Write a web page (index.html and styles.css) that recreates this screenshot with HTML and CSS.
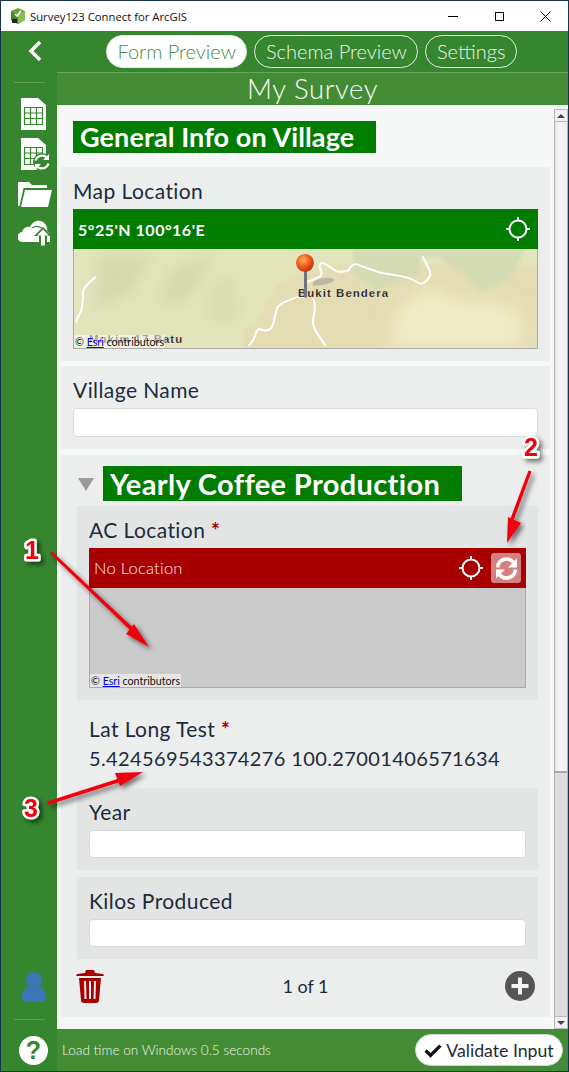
FILE: index.html
```html
<!DOCTYPE html>
<html lang="en">
<head>
    <meta charset="UTF-8">
    <title>Survey123 Connect for ArcGIS</title>
    <link rel="stylesheet" href="styles.css">
</head>
<body>
    <div class="window">
        <div class="titlebar">
            <svg class="app-logo" viewBox="0 0 16 16">
                <path d="M8 0l7 3v9l-7 4-7-4V3z" fill="#6aa53a"/>
                <path d="M8 7l7-4v9l-7 4z" fill="#8dbb55"/>
                <path d="M1 3l7 4v9l-7-4z" fill="#4d8430"/>
                <path d="M5 6l2 2 4-5" fill="none" stroke="#fff" stroke-width="1.6"/>
                <rect x="2" y="11" width="5" height="4" fill="#222"/>
            </svg>
            <span class="app-name">Survey123 Connect for ArcGIS</span>
            <div class="win-controls">
                <svg viewBox="0 0 11 11"><path d="M0 5.5h10" stroke="#000"/></svg>
                <svg viewBox="0 0 11 11"><rect x="1.5" y="1.5" width="8" height="8" fill="none" stroke="#000"/></svg>
                <svg viewBox="0 0 11 11"><path d="M.5.5l10 10M10.5.5l-10 10" stroke="#000" fill="none"/></svg>
            </div>
        </div>

        <div class="app">
            <div class="sidebar">
                <svg class="back-icon" viewBox="0 0 14 22"><path d="M12 2L3 11l9 9" fill="none" stroke="#fff" stroke-width="3.4"/></svg>
                <div class="side-line"></div>
                <svg class="side-icon sheet" viewBox="0 0 25 32">
                    <path d="M0 0h17l8 7v25H0z" fill="#fff"/>
                    <path d="M3.500 9.500h18v17h-18zM3.500 15h18M3.500 20.500h18M9.500 9.500v17M15.500 9.500v17" fill="none" stroke="#36862f" stroke-width="1.200"/>
                </svg>
                <svg class="side-icon sheet-sync" viewBox="0 0 30 32">
                    <path d="M0 0h17l8 7v25H0z" fill="#fff"/>
                    <path d="M3.500 9.500h18v17h-18zM3.500 15h18M3.500 20.500h18M9.500 9.500v17M15.500 9.500v17" fill="none" stroke="#36862f" stroke-width="1.200"/>
                    <circle cx="21" cy="24" r="9" fill="#36862f"/>
                    <path d="M14.500 22.500a7 7 0 0 1 11.500-3M27.500 25.500a7 7 0 0 1-11.500 3" fill="none" stroke="#fff" stroke-width="2.200"/>
                    <path d="M28 16v6h-6zM14 32v-6h6z" fill="#fff"/>
                </svg>
                <svg class="side-icon folder" viewBox="0 0 34 26">
                    <path d="M0 24V0h11l3 3h15v3H5.500L1.500 24z" fill="#fff"/>
                    <path d="M7 8h27l-4 17H3z" fill="#fff"/>
                </svg>
                <svg class="side-icon cloud" viewBox="0 0 33 27">
                    <path d="M5 23a5 5 0 0 1-1-10c1-4 5-6 8-5 2-5 8-8 13-5 3 2 5 6 4 9 2 1 3 3 3 5v6z" fill="#fff"/>
                    <path d="M14 9q6-4 12 2" fill="none" stroke="#36862f" stroke-width="1.200"/>
                    <path d="M25 8l9 9h-5v10h-8V17h-5z" fill="#36862f"/>
                    <path d="M25 10.500l6 6h-4v10h-4v-10h-4z" fill="#fff"/>
                </svg>
                <div class="side-space"></div>
                <svg class="side-icon person" viewBox="0 0 24 30">
                    <circle cx="12" cy="8" r="8" fill="#3e75b5"/>
                    <path d="M0 26c0-6 2-10 7-12 2 3 8 3 10 0 5 2 7 6 7 12 0 3-2 4-5 4H5c-3 0-5-1-5-4z" fill="#3e75b5"/>
                </svg>
                <div class="side-line bottom"></div>
                <div class="help">?</div>
            </div>

            <div class="main">
                <div class="tabs">
                    <div class="tab active">Form Preview</div>
                    <div class="tab">Schema Preview</div>
                    <div class="tab">Settings</div>
                </div>
                <div class="survey-title">My Survey</div>

                <div class="body">
                    <div class="form">
                        <div class="section-title first">General Info on Village</div>

                        <div class="card">
                            <div class="label">Map Location</div>
                            <div class="map-head green">
                                <span class="coords">5°25'N 100°16'E</span>
                                <svg class="target" viewBox="0 0 26 26">
                                    <circle cx="13" cy="13" r="8.500" fill="none" stroke="#fff" stroke-width="2"/>
                                    <path d="M13 1v4M13 21v4M1 13h4M21 13h4" stroke="#fff" stroke-width="2"/>
                                </svg>
                            </div>
                            <div class="map">
                                <svg class="map-art" viewBox="0 0 465 100" preserveAspectRatio="none">
                                    <defs>
                                        <filter id="soft"><feGaussianBlur stdDeviation="7"/></filter>
                                        <filter id="soft2"><feGaussianBlur stdDeviation="1.500"/></filter>
                                        <filter id="soft3"><feGaussianBlur stdDeviation="9"/></filter>
                                        <radialGradient id="ball" cx="40%" cy="35%" r="70%">
                                            <stop offset="0" stop-color="#ffb060"/>
                                            <stop offset="0.5" stop-color="#f0601c"/>
                                            <stop offset="1" stop-color="#c02a10"/>
                                        </radialGradient>
                                    </defs>
                                    <rect width="465" height="100" fill="#e2e5bc"/>
                                    <g filter="url(#soft)">
                                        <path d="M25 5h55l-22 40-38 18zM95 22l50-22-30 52-30 8z" fill="#d6d9ae"/>
                                        <path d="M130 45l28-22 10 45-30 12z" fill="#d9ddb3"/>
                                    </g>
                                    <g filter="url(#soft2)">
                                        <path d="M170 100v-19l12-4 8-16 15-27 25-8 40-10h195v84z" fill="#e4dcb2"/>
                                        <path d="M280 0l2 28 22 13 42-14 2-18 16-2 32 22 10 16 32-14 15-31z" fill="#d4dbb3"/>
                                    </g>
                                    <path d="M325 60l30-22 30 14 40 2 25 10v36H315z" fill="#f1ecc8" filter="url(#soft3)"/>
                                    <g fill="none" stroke="#fff" stroke-width="2">
                                        <path d="M22 28C12 36 8 42 9 46c1 5-1 8-1 12 0 6-5 10-6 16"/>
                                        <path d="M175 98c5-4 6-8 7-11 1-4 3-7 5-6 4 2 8 2 11-1 3-3 4-18 7-22 3-4 10-6 15-8 4-2 8-2 12-1"/>
                                        <path d="M234 33c4-1 9-3 13-5 2-1 2-5 1-7-3-3-1-7 2-7 5 1 11 9 16 9 5 0 8 0 10-2 2-4 5-7 10-5 6 3 14 5 22 8 10 2 22 3 30 6 4 2 7 5 11 5 4-1 7-5 9-9 0-5-6-14-8-19"/>
                                        <path d="M240 50c3 6 2 12 0 22-1 8 6 16 13 26"/>
                                    </g>
                                    <path d="M240 34c6-6 18-6 22-3-3 4-12 6-22 6z" fill="#a8a89a" opacity="0.7"/>
                                    <text class="place" x="225" y="48">Bukit Bendera</text>
                                    <text class="place dim" x="15" y="95">Mukim 17 Batu</text>
                                    <rect x="231" y="22" width="3" height="27" fill="#6f7480"/>
                                    <circle cx="232" cy="14" r="9" fill="url(#ball)"/>
                                </svg>
                                <div class="attribution">© <a>Esri</a> contributors</div>
                            </div>
                        </div>

                        <div class="card gap5">
                            <div class="label">Village Name</div>
                            <div class="input"></div>
                        </div>

                        <div class="group">
                            <div class="group-head">
                                <div class="triangle"></div>
                                <div class="section-title">Yearly Coffee Production</div>
                            </div>

                            <div class="card inner">
                                <div class="label">AC Location <span class="req">*</span></div>
                                <div class="map-head red">
                                    <span class="no-location">No Location</span>
                                    <svg class="target" viewBox="0 0 26 26">
                                        <circle cx="13" cy="13" r="8.500" fill="none" stroke="#fff" stroke-width="2"/>
                                        <path d="M13 1v4M13 21v4M1 13h4M21 13h4" stroke="#fff" stroke-width="2"/>
                                    </svg>
                                    <div class="sync-btn">
                                        <svg viewBox="0 0 24 24">
                                            <path d="M3.500 11a8.500 8.500 0 0 1 15-5M20.500 13a8.500 8.500 0 0 1-15 5" fill="none" stroke="#fff" stroke-width="3.400"/>
                                            <path d="M22 2.500V11h-8.500zM2 21.500V13h8.500z" fill="#fff"/>
                                        </svg>
                                    </div>
                                </div>
                                <div class="map empty">
                                    <div class="attribution">© <a>Esri</a> contributors</div>
                                </div>
                            </div>

                            <div class="plain-field">
                                <div class="label">Lat Long Test <span class="req">*</span></div>
                                <div class="value">5.424569543374276 100.27001406571634</div>
                            </div>

                            <div class="card inner">
                                <div class="label">Year</div>
                                <div class="input short"></div>
                            </div>
                            <div class="card inner gap7">
                                <div class="label">Kilos Produced</div>
                                <div class="input short"></div>
                            </div>

                            <div class="repeat-row">
                                <svg class="trash" viewBox="0 0 28 34">
                                    <path d="M0 7l1-2 8-1 1-3h8l1 3 8 1 1 2z" fill="#a80000"/>
                                    <path d="M3 9h22l-2 22c0 2-1 3-3 3H8c-2 0-3-1-3-3z" fill="#a80000"/>
                                    <path d="M9 12l.5 18M14 12v18M19 12l-.5 18" stroke="#eceeee" stroke-width="2"/>
                                </svg>
                                <div class="pager">1 of 1</div>
                                <svg class="plus" viewBox="0 0 30 30">
                                    <circle cx="15" cy="15" r="15" fill="#555"/>
                                    <path d="M15 6.500v17M6.500 15h17" stroke="#f2f2f2" stroke-width="4"/>
                                </svg>
                            </div>
                        </div>
                    </div>

                    <div class="scrollbar">
                        <div class="scroll-btn"><div class="arrow-up"></div></div>
                        <div class="scroll-thumb"></div>
                        <div class="scroll-track"></div>
                        <div class="scroll-btn"><div class="arrow-down"></div></div>
                    </div>
                </div>

                <div class="footer">
                    <span class="load-time">Load time on Windows 0.5 seconds</span>
                    <div class="validate">
                        <svg viewBox="0 0 22 18"><path d="M2 9l6 6L20 3" fill="none" stroke="#111" stroke-width="4"/></svg>
                        <span>Validate Input</span>
                    </div>
                </div>
            </div>
        </div>
    </div>

    <!-- red callouts drawn over the screenshot -->
    <svg class="callouts" viewBox="0 0 569 1072">
        <defs>
            <filter id="shade" x="-20%" y="-20%" width="150%" height="150%">
                <feDropShadow dx="3" dy="3" stdDeviation="2.500" flood-color="#000" flood-opacity="0.55"/>
            </filter>
        </defs>
        <g filter="url(#shade)" fill="#f00010">
            <path d="M50 553.500l2-2 84 79-2.500 3-1.500-1.500z"/>
            <path d="M149 647l-23-13 8-10z"/>
            <path d="M528.500 470.500l3 1-19 52-3.500-1z"/>
            <path d="M507 543l1-26 13 6z"/>
            <path d="M47 801.500l72-23 1 3.500-72 23z"/>
            <path d="M143 772l-28 1 5 13z"/>
        </g>
        <g filter="url(#shade)">
            <text class="callout-num" x="32" y="559">1</text>
            <text class="callout-num" x="531" y="456">2</text>
            <text class="callout-num" x="31" y="817">3</text>
        </g>
    </svg>
</body>
</html>
```

FILE: styles.css
```css
:root {
    --side: #36862f;
    --bar: #438c35;
    --ink: #1d2b3a;
    --sheet: #f6f8f8;
    --card: #eceeee;
    --inner: #e3e5e5;
    --survey-green: #007c00;
    --alert: #a80000;
}

* {
    margin: 0;
    padding: 0;
    box-sizing: border-box;
}

body {
    width: 569px;
    height: 1072px;
    overflow: hidden;
    position: relative;
    font-family: "Lato", "Open Sans", sans-serif;
    color: var(--ink);
}

.window {
    height: 1072px;
    display: flex;
    flex-direction: column;
    border: 1px solid #17344c;
    background: white;
}

/* title bar */
.titlebar {
    height: 30px;
    display: flex;
    align-items: center;
    padding-left: 9px;
    flex-shrink: 0;
}

.app-logo {
    width: 16px;
    height: 16px;
    margin-right: 4px;
}

.app-name {
    font-family: "Open Sans", sans-serif;
    font-size: 11.3px;
    color: #111;
}

.win-controls {
    margin-left: auto;
    display: flex;
    gap: 35px;
    padding-right: 17px;
}

.win-controls svg {
    width: 11px;
    height: 11px;
}

.app {
    flex: 1;
    display: flex;
    min-height: 0;
}

/* left rail */
.sidebar {
    width: 56px;
    background: var(--side);
    display: flex;
    flex-direction: column;
    align-items: center;
    flex-shrink: 0;
}

.back-icon {
    width: 14px;
    height: 22px;
    margin-top: 9px;
    margin-left: 12px;
}

.side-line {
    width: 31px;
    height: 1px;
    background: #5f9f55;
    margin-top: 20px;
}

.side-line.bottom {
    margin-top: 16px;
}

.side-icon {
    display: block;
}

.sheet {
    width: 25px;
    height: 32px;
    margin-top: 15px;
    margin-left: 8px;
}

.sheet-sync {
    width: 30px;
    height: 32px;
    margin-top: 8px;
    margin-left: 13px;
}

.folder {
    width: 34px;
    height: 26px;
    margin-top: 12px;
    margin-left: 11px;
}

.cloud {
    width: 33px;
    height: 27px;
    margin-top: 11px;
    margin-left: 11px;
}

.side-space {
    flex: 1;
}

.person {
    width: 24px;
    height: 30px;
    margin-left: 10px;
    margin-bottom: 1px;
}

.help {
    width: 29px;
    height: 29px;
    border-radius: 50%;
    background: white;
    color: var(--side);
    font-family: "Liberation Sans", sans-serif;
    font-weight: 700;
    font-size: 25px;
    line-height: 29px;
    text-align: center;
    margin: 16px 0 6px 9px;
}

/* main column */
.main {
    flex: 1;
    min-width: 0;
    display: flex;
    flex-direction: column;
}

.tabs {
    height: 42px;
    background: var(--side);
    display: flex;
    gap: 7px;
    padding: 4px 0 0 49px;
    border-bottom: 1px solid #6ba360;
}

.tab {
    height: 33px;
    line-height: 31px;
    padding: 0 10.5px;
    border: 1px solid #e8f0e6;
    border-radius: 17px;
    color: #eef4ec;
    font-size: 20px;
    font-weight: 300;
}

.tab.active {
    background: white;
    color: #468d3e;
}

.survey-title {
    height: 32px;
    background: var(--bar);
    color: #f8fbf6;
    font-size: 27.5px;
    font-weight: 300;
    line-height: 31px;
    text-align: center;
    letter-spacing: 0.6px;
    flex-shrink: 0;
}

.body {
    flex: 1;
    min-height: 0;
    display: flex;
    background: var(--sheet);
    overflow: hidden;
}

.form {
    width: 493px;
    padding-left: 4px;
}

.section-title {
    background: var(--survey-green);
    color: white;
    font-size: 27px;
    font-weight: 700;
    line-height: 31px;
    height: 32px;
    padding-left: 7px;
    letter-spacing: 0.1px;
}

.section-title.first {
    width: 303px;
    margin: 16px 0 14px 12px;
}

.card {
    background: var(--card);
    padding: 0 12px 12px;
}

.gap5 {
    margin-top: 5px;
}

.label {
    height: 42px;
    line-height: 48px;
    font-size: 21px;
    letter-spacing: 0.42px;
}

.req {
    color: var(--alert);
    font-weight: 700;
}

.map-head {
    height: 40px;
    display: flex;
    align-items: center;
    color: white;
}

.map-head.green {
    background: var(--survey-green);
    padding: 0 7px 0 5px;
}

.map-head.red {
    background: var(--alert);
    padding: 0 5px;
}

.coords {
    font-size: 16px;
    font-weight: 700;
    letter-spacing: 0.5px;
}

.no-location {
    font-size: 16.5px;
    font-weight: 300;
    letter-spacing: 0.25px;
    color: #fdeeee;
}

.target {
    width: 26px;
    height: 26px;
    margin-left: auto;
}

.sync-btn {
    width: 30px;
    height: 30px;
    margin-left: 7px;
    border-radius: 3px;
    background: #d48080;
    display: flex;
    align-items: center;
    justify-content: center;
}

.sync-btn svg {
    width: 25px;
    height: 25px;
}

.map {
    height: 100px;
    position: relative;
    border: 1px solid #ababab;
    border-top: none;
    overflow: hidden;
}

.map.empty {
    background: #cbcbcb;
}

.map-art {
    display: block;
    width: 100%;
    height: 100%;
}

.place {
    font-family: "Liberation Sans", sans-serif;
    font-size: 11.5px;
    font-weight: 700;
    letter-spacing: 1.05px;
    fill: #161616;
    stroke: #ffffff80;
    stroke-width: 0.3px;
}

.place.dim {
    fill: #222;
}

.attribution {
    position: absolute;
    left: 0;
    bottom: 0;
    height: 13px;
    line-height: 13px;
    padding: 0 1px;
    font-size: 10.7px;
    color: #111;
    background: rgba(255, 255, 255, 0.5);
}

.attribution a {
    color: #0000ee;
    text-decoration: underline;
}

.input {
    height: 29px;
    background: white;
    border: 1px solid #d8dada;
    border-radius: 4px;
}

.input.short {
    height: 28px;
}

/* repeat group */
.group {
    margin-top: 6px;
    background: var(--card);
    padding: 11px 12px 0 16px;
    height: 562px;
}

.group-head {
    display: flex;
    align-items: center;
    height: 35px;
    margin-bottom: 5px;
    gap: 9px;
}

.group-head .section-title {
    width: 359px;
    height: 35px;
    line-height: 35px;
    padding-left: 7px;
    font-size: 29px;
    font-weight: 700;
    letter-spacing: 0.35px;
}

.triangle {
    width: 0;
    height: 0;
    margin-left: 1px;
    border-left: 8px solid transparent;
    border-right: 8px solid transparent;
    border-top: 13px solid #9a9a9a;
    margin-top: 2px;
}

.card.inner {
    background: var(--inner);
}

.gap7 {
    margin-top: 7px;
}

.plain-field {
    height: 88px;
    padding: 5px 12px 0;
}

.value {
    font-size: 20px;
    line-height: 28px;
    letter-spacing: 0.38px;
    margin-top: -3px;
}

.repeat-row {
    height: 57px;
    display: flex;
    align-items: center;
    justify-content: space-between;
    padding: 0 3px 4px 0;
}

.trash {
    width: 28px;
    height: 34px;
    margin-left: -1px;
}

.pager {
    font-size: 18px;
    margin-left: 2px;
}

.plus {
    width: 30px;
    height: 30px;
}

/* scrollbar */
.scrollbar {
    width: 14px;
    margin: 4px 0 0 4px;
    display: flex;
    flex-direction: column;
}

.scroll-btn {
    height: 13px;
    background: #f1f1f1;
    border: 1px solid #b8b8b8;
    display: flex;
    align-items: center;
    justify-content: center;
    flex-shrink: 0;
}

.arrow-up {
    border-left: 4px solid transparent;
    border-right: 4px solid transparent;
    border-bottom: 4px solid #444;
}

.arrow-down {
    border-left: 4px solid transparent;
    border-right: 4px solid transparent;
    border-top: 4px solid #444;
}

.scroll-thumb {
    height: 651px;
    background: linear-gradient(to right, #e6e6e6, #f6f6f6 40%, #efefef);
    border-left: 1px solid #b4b4b4;
    border-right: 1px solid #b4b4b4;
    border-bottom: 2px solid #a8a8a8;
}

.scroll-track {
    flex: 1;
    background: #dddddd;
    border-left: 1px solid #b4b4b4;
    border-right: 1px solid #b4b4b4;
}

/* footer */
.footer {
    height: 42px;
    background: var(--bar);
    display: flex;
    align-items: center;
    padding: 0 5px 0 5px;
    flex-shrink: 0;
}

.load-time {
    font-size: 13.6px;
    font-weight: 300;
    color: #ecf6e8;
}

.validate {
    margin-left: auto;
    height: 32px;
    width: 148px;
    border: 1px solid #d4d4d4;
    border-radius: 16px;
    background: white;
    display: flex;
    align-items: center;
    justify-content: center;
    gap: 4px;
    font-size: 17.7px;
}

.validate svg {
    width: 18px;
    height: 15px;
}

/* annotations */
.callouts {
    position: absolute;
    left: 0;
    top: 0;
    width: 569px;
    height: 1072px;
    pointer-events: none;
}

.callout-num {
    font-family: "Liberation Sans", sans-serif;
    font-size: 25px;
    font-weight: 700;
    text-anchor: middle;
    fill: #f00010;
    stroke: white;
    stroke-width: 5px;
    stroke-linejoin: round;
    paint-order: stroke;
}
```
